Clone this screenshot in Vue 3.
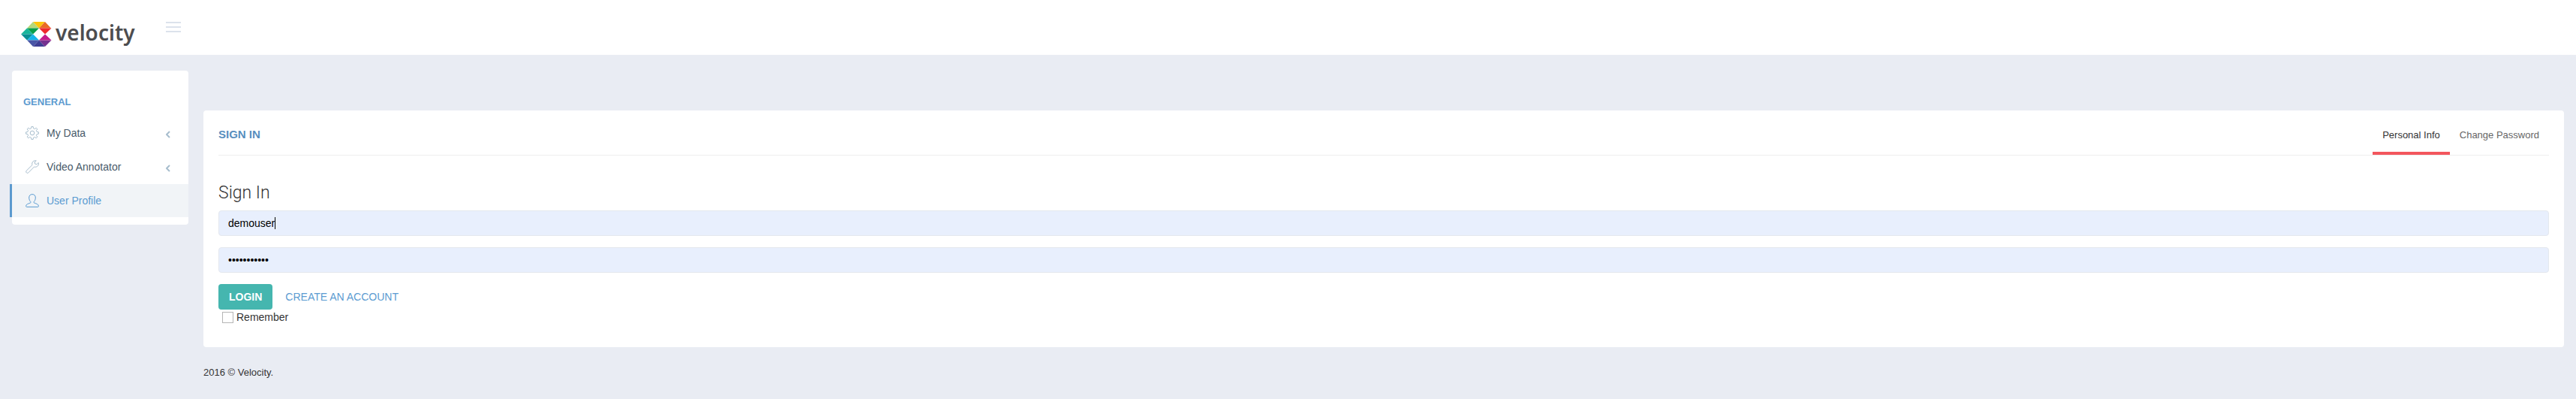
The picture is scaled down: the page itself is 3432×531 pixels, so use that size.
<script setup>
import { ref } from 'vue'

const username = ref('demouser')
const password = ref('demouser123')
const remember = ref(false)

const menu = [
  { label: 'My Data', icon: 'gear', arrow: true },
  { label: 'Video Annotator', icon: 'wrench', arrow: true },
  { label: 'User Profile', icon: 'user', active: true },
]
const tabs = [{ label: 'Personal Info', active: true }, { label: 'Change Password' }]

// Outline of an eight-toothed gear centred in an 18 x 18 box
const point = (radius, degrees) => {
  const a = (degrees * Math.PI) / 180
  return `${(9 + radius * Math.cos(a)).toFixed(2)} ${(9 + radius * Math.sin(a)).toFixed(2)}`
}
const gearPath =
  Array.from({ length: 8 }, (_, i) => {
    const a = i * 45
    const start = i === 0 ? 'M' : 'L'
    return `${start}${point(6.4, a - 13)}L${point(8.5, a - 8)}L${point(8.5, a + 8)}L${point(6.4, a + 13)}`
  }).join('') + 'Z'
</script>

<template>
  <div class="page">
    <header class="topbar">
      <a href="#" class="logo">
        <svg width="41" height="33" viewBox="0 0 41 33" aria-hidden="true">
          <path d="M16 0L8 8.500H24Z" fill="#b5d87b" />
          <path d="M16 0H32L24 8.500Z" fill="#fdc50c" />
          <path d="M32 0L24 8.500H40Z" fill="#e96b25" />
          <path d="M24 8.500H40.500L32 16.500Z" fill="#ee2a2e" />
          <path d="M8 8.500L16 16.500L24 8.500Z" fill="#0a9f4b" />
          <path d="M8 8.500L0 16.500H16Z" fill="#18b59b" />
          <path d="M0 16.500H16L8 24.500Z" fill="#0a8f93" />
          <path d="M16 16.500L8 24.500H24Z" fill="#16b4ea" />
          <path d="M8 24.500H24L16 33Z" fill="#4a56a6" />
          <path d="M24 24.500L16 33H32Z" fill="#3f3f94" />
          <path d="M24 24.500H40.500L32 33Z" fill="#75318f" />
          <path d="M32 16.500L24 24.500H40.500Z" fill="#c31c8b" />
        </svg>
        <span>velocity</span>
      </a>
      <button type="button" class="toggler" aria-label="Toggle menu">
        <i></i><i></i><i></i>
      </button>
    </header>

    <div class="body">
      <nav class="sidebar">
        <h3>General</h3>
        <ul>
          <li v-for="item in menu" :key="item.label">
            <a href="#" :class="{ active: item.active }">
              <svg class="icon" viewBox="0 0 18 18" width="18" height="18" aria-hidden="true">
                <template v-if="item.icon === 'gear'">
                  <path :d="gearPath" />
                  <circle cx="9" cy="9" r="2.800" />
                </template>
                <path v-else-if="item.icon === 'wrench'" d="M14.300 .9C12 .2 9.300 1.600 8.800 4c-.2.900-.1 1.700.2 2.500L1.200 14.200c-1.600 1.700.9 4.300 2.600 2.600L11.500 9c2.800 1 6-1 6-4.200 0-.5-.1-1-.2-1.300l-2.400 2.200-2.300-.6-.6-2.200z" />
                <path v-else d="M9 .6C6.400.6 4.700 2.300 4.700 5c0 2.500 1 4.500 2.100 5.500.4.500.3 1.200-.4 1.500-2.500 1.100-5.800 1.600-5.800 4.300 0 .7.300 1.100.9 1.100h15c.6 0 .9-.4.900-1.100 0-2.700-3.300-3.200-5.800-4.300-.7-.3-.8-1-.4-1.500 1.100-1 2.100-3 2.100-5.500C13.300 2.300 11.600.6 9 .6z" />
              </svg>
              <span>{{ item.label }}</span>
              <svg v-if="item.arrow" class="arrow" viewBox="0 0 6 10" width="6" height="10" aria-hidden="true">
                <path d="M5 1L1 5l4 4" />
              </svg>
            </a>
          </li>
        </ul>
      </nav>

      <main>
        <section class="card">
          <div class="card-head">
            <h1>Sign In</h1>
            <div class="tabs">
              <a v-for="tab in tabs" :key="tab.label" href="#" :class="{ active: tab.active }">{{ tab.label }}</a>
            </div>
          </div>
          <form @submit.prevent>
            <h2>Sign In</h2>
            <div class="user-field">
              <input v-model="username" class="field" type="text" aria-label="Username" />
              <i class="caret"></i>
            </div>
            <input v-model="password" class="field" type="password" aria-label="Password" />
            <div class="actions">
              <button type="submit">Login</button>
              <a href="#">Create an account</a>
            </div>
            <label class="remember"><input v-model="remember" type="checkbox" />Remember</label>
          </form>
        </section>
        <footer>2016 © Velocity.</footer>
      </main>
    </div>
  </div>
</template>

<style>
body {
  margin: 0;
  background: #e9ecf3;
}
</style>

<style scoped>
* {
  box-sizing: border-box;
}
.page {
  min-height: 100vh;
  background: #e9ecf3;
  color: #333;
  font: 14px/20px "Liberation Sans", Arial, sans-serif;
}
a {
  color: #5b9bd1;
  text-decoration: none;
}
h1, h2, h3, ul {
  margin: 0;
  padding: 0;
}
.topbar {
  display: flex;
  align-items: flex-start;
  height: 73px;
  padding: 0 28px;
  background: #fff;
}
.logo {
  display: flex;
  align-items: flex-start;
  gap: 5px;
  width: 193px;
  padding-top: 29px;
  color: #4d4d4f;
  font: 600 28px/28px "Noto Sans", sans-serif;
}
.logo svg {
  flex: none;
}
.toggler {
  display: flex;
  flex-direction: column;
  gap: 4px;
  width: 20px;
  margin-top: 29px;
  padding: 0;
  border: 0;
  background: none;
}
.toggler i {
  height: 2px;
  background: #dce2ec;
}
.body {
  display: flex;
  align-items: flex-start;
  gap: 20px;
  padding: 21px 16px 0;
}
.sidebar {
  flex: none;
  width: 235px;
  padding: 32px 0 10px;
  background: #fff;
  border-radius: 4px;
}
.sidebar h3 {
  padding: 0 15px 9px;
  color: #5c9acf;
  font-size: 13px;
  line-height: 20px;
  text-transform: uppercase;
}
.sidebar ul {
  display: grid;
  gap: 1px;
  list-style: none;
}
.sidebar li a {
  display: flex;
  align-items: center;
  height: 44px;
  margin-left: -3px;
  padding: 0 24px 0 18px;
  border-left: 3px solid transparent;
  color: #485a6a;
}
.sidebar li span {
  flex: 1;
  padding-left: 10px;
}
.sidebar li a.active {
  border-left-color: #5c9acf;
  background: #f1f4f7;
  color: #5b9bd1;
}
.icon,
.arrow {
  fill: none;
  stroke: #a7bdcd;
  stroke-linejoin: round;
}
.active .icon {
  stroke: #5b9bd1;
}
.arrow {
  margin-top: 4px;
  stroke-width: 2px;
}
main {
  flex: 1;
  padding-top: 53px;
}
.card {
  padding: 12px 20px 31px;
  background: #fff;
  border-radius: 4px;
}
.card-head {
  display: flex;
  justify-content: space-between;
  height: 48px;
  border-bottom: 1px solid #eee;
}
.card-head h1 {
  padding-top: 10px;
  color: #578ebe;
  font-size: 15px;
  line-height: 20px;
  text-transform: uppercase;
}
.tabs {
  display: flex;
}
.tabs a {
  padding: 11px 13px 0;
  color: #666;
  font-size: 13px;
}
.tabs a.active {
  border-bottom: 4px solid #f3565d;
  color: #333;
}
form {
  display: flex;
  flex-direction: column;
  padding-top: 35px;
}
form h2 {
  margin-bottom: 8px;
  font: 300 23px/30px Roboto, "Liberation Sans", sans-serif;
}
.field {
  display: block;
  width: 100%;
  height: 34px;
  margin-bottom: 15px;
  padding: 0 12px;
  border: 1px solid #e4e8ee;
  border-radius: 4px;
  outline: 0;
  background: #e8effd;
  color: #000;
  font: 14px/20px "Liberation Sans", Arial, sans-serif;
}
.user-field {
  position: relative;
}
.caret {
  position: absolute;
  top: 9px;
  left: 75px;
  width: 1px;
  height: 16px;
  background: #000;
}
.actions {
  display: flex;
  align-items: center;
  gap: 17px;
  text-transform: uppercase;
}
.actions button {
  height: 34px;
  padding: 0 14px;
  border: 0;
  border-radius: 4px;
  background: #45b6af;
  color: #fff;
  font: bold 14px/20px "Liberation Sans", Arial, sans-serif;
  text-transform: uppercase;
}
.remember {
  display: flex;
  align-items: center;
  gap: 4px;
  height: 18px;
  margin-top: 1px;
  padding-left: 5px;
}
.remember input {
  appearance: none;
  width: 15px;
  height: 15px;
  margin: 0;
  border: 1px solid #b5b5b5;
  background: #fff;
}
footer {
  padding: 24px 0 21px;
  font-size: 13px;
}
</style>
